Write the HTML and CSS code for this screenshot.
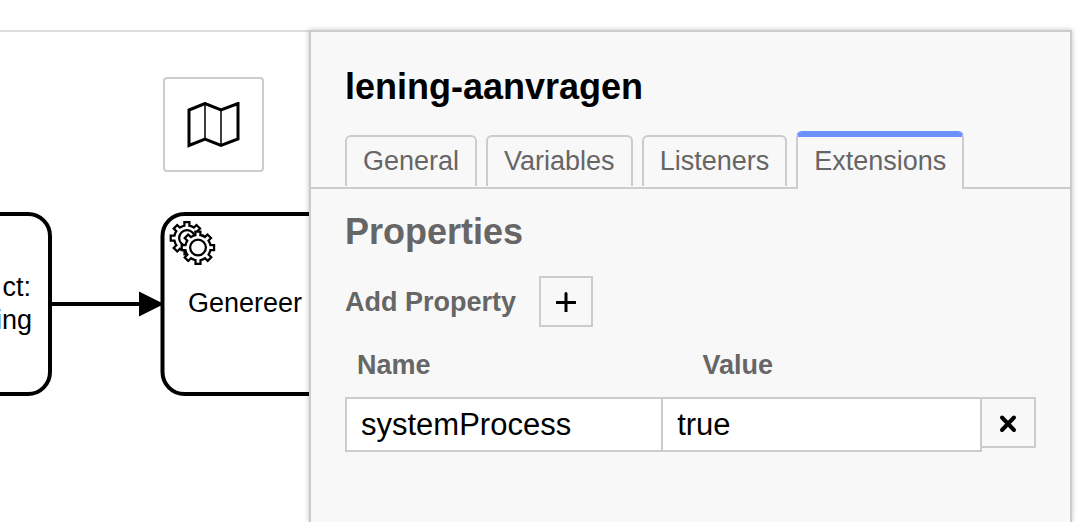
FILE: index.html
```html
<!DOCTYPE html>
<html lang="nl">
<head>
<meta charset="utf-8">
<title>lening-aanvragen</title>
<link rel="stylesheet" href="styles.css">
</head>
<body>
<div class="modeler">
  <main class="canvas">
    <svg class="diagram" role="img" aria-label="Process diagram">
      <defs>
        <path id="gear" d="m 1.12,7.3 v -1.71335 c 0.352326,-0.0705 0.703932,-0.17838 1.047628,-0.32133 0.344416,-0.14465 0.665822,-0.32133 0.966377,-0.52145 l 1.19431,1.18005 1.567487,-1.57688 -1.195028,-1.18014 c 0.403376,-0.61394 0.683079,-1.29908 0.825447,-2.01824 l 1.622133,-0.01 v -2.2196 l -1.636514,0.01 c -0.07333,-0.35153 -0.178319,-0.70024 -0.323564,-1.04372 -0.145244,-0.34406 -0.321407,-0.6644 -0.522735,-0.96217 l 1.131035,-1.13631 -1.583305,-1.56293 -1.129598,1.13589 c -0.614052,-0.40108 -1.302883,-0.68093 -2.022633,-0.82247 l 0.0093,-1.61852 h -2.241173 l 0.0042,1.63124 c -0.353763,0.0736 -0.705369,0.17977 -1.049785,0.32371 -0.344415,0.14437 -0.665102,0.32092 -0.9635006,0.52006 l -1.1698628,-1.15823 -1.5667691,1.5792 1.1684265,1.15669 c -0.4026573,0.61283 -0.68308,1.29797 -0.8247287,2.01713 l -1.6588041,0.003 v 2.22174 l 1.6724648,-0.006 c 0.073327,0.35077 0.1797598,0.70243 0.3242851,1.04472 0.1452428,0.34448 0.3214064,0.6644 0.5227339,0.96066 l -1.1993431,1.19723 1.5840256,1.56011 1.1964668,-1.19348 c 0.6140517,0.40346 1.3028827,0.68232 2.0233517,0.82331 l 7.19e-4,1.69892 z"/>
      </defs>
      <rect class="task" x="-175" y="182" width="225" height="180" rx="22"/>
      <text class="task-label task-label-end" x="31" y="264">ct:</text>
      <text class="task-label task-label-end" x="32" y="297">ing</text>
      <rect class="task" x="162.5" y="182" width="225" height="180" rx="22"/>
      <g class="gear" transform="translate(187 206) scale(2.25)">
        <use href="#gear"/>
        <circle r="3.5"/>
      </g>
      <g class="gear" transform="translate(198 215.5) scale(2.25)">
        <use href="#gear"/>
        <circle r="3.5"/>
      </g>
      <text class="task-label" x="188" y="280">Genereer</text>
      <path class="flow" d="M52 272H142"/>
      <path d="M139 259.500L164 272L139 284.500Z"/>
    </svg>
    <button class="minimap-toggle" type="button" aria-label="Toggle minimap">
      <svg class="map-icon" viewBox="0 0 54 46" aria-hidden="true">
        <path class="map-outline" d="M2 8L18 1.500L34 8L51 1.500V37L34 43.500L18 37L2 43.500Z"/>
        <path class="map-folds" d="M18 1.500V37M34 8V43.500"/>
      </svg>
    </button>
  </main>
  <aside class="panel">
    <h1 class="panel-title">lening-aanvragen</h1>
    <nav class="tabs">
      <a class="tab" href="#general">General</a>
      <a class="tab" href="#variables">Variables</a>
      <a class="tab" href="#listeners">Listeners</a>
      <a class="tab tab-active" href="#extensions" aria-current="page">Extensions</a>
    </nav>
    <section class="group" id="extensions">
      <h2 class="group-title">Properties</h2>
      <div class="add-row">
        <label for="add-property">Add Property</label>
        <button class="icon-button" id="add-property" type="button">
          <svg class="button-icon" viewBox="0 0 20 20" aria-hidden="true"><path class="plus" d="M10 1.500V19.500M1 10.500H19"/></svg>
        </button>
      </div>
      <div class="column-labels">
        <label for="property-name">Name</label>
        <label for="property-value">Value</label>
      </div>
      <div class="property-row">
        <input class="field field-name" id="property-name" type="text" value="systemProcess">
        <input class="field field-value" id="property-value" type="text" value="true">
        <button class="icon-button remove" type="button" aria-label="Remove property">
          <svg class="button-icon" viewBox="0 0 20 20" aria-hidden="true"><path class="cross" d="M4 4.500L16 17M16 4.500L4 17"/></svg>
        </button>
      </div>
    </section>
  </aside>
</div>
</body>
</html>
```
FILE: styles.css
```css
* {
  box-sizing: border-box;
}

body {
  margin: 0;
  background: #fff;
  color: #000;
  font-family: "Liberation Sans", Arial, sans-serif;
  font-size: 27px;
  line-height: 32px;
}

.modeler {
  display: grid;
  grid-template-columns: 309fr 763fr;
  min-height: 100vh;
  padding: 30px 5px 0 0;
  overflow: hidden;
}

.canvas {
  position: relative;
  min-width: 0;
  border-top: 2px solid #ddd;
}

.diagram {
  display: block;
  width: 100%;
  height: 100%;
}

.task {
  fill: #fff;
  stroke: #000;
  stroke-width: 4;
}

.task-label-end {
  text-anchor: end;
}

.gear {
  fill: #fff;
  stroke: #000;
  stroke-width: 1;
}

.flow {
  stroke: #000;
  stroke-width: 4;
}

.minimap-toggle {
  position: absolute;
  top: 45px;
  right: 45px;
  display: flex;
  align-items: center;
  justify-content: center;
  width: 101px;
  height: 95px;
  padding: 0;
  border: 2px solid #ccc;
  border-radius: 4px;
  background: #fff;
}

.map-icon {
  width: 54px;
  height: 46px;
  fill: none;
  stroke: #000;
}

.map-outline {
  stroke-width: 3;
}

.map-folds {
  stroke-width: 1.5;
}

.panel {
  position: relative;
  min-width: 0;
  border: 2px solid #ccc;
  border-bottom: 0;
  background: #f8f8f8;
  color: #666;
  box-shadow: 0 0 5px rgba(0, 0, 0, 0.25);
}

.panel-title {
  margin: 35px 34px 24px;
  color: #000;
  font-size: 36px;
  line-height: 40px;
}

.tabs {
  display: flex;
  align-items: flex-end;
  gap: 9px;
  padding: 0 34px;
  border-bottom: 2px solid #ccc;
}

.tab {
  margin-bottom: 1px;
  padding: 8px 16px 9px;
  border: 2px solid #ccc;
  border-bottom: 0;
  border-radius: 6px 6px 0 0;
  color: #666;
  text-decoration: none;
}

.tab-active {
  margin-bottom: -2px;
  padding-bottom: 12px;
  border-top: 6px solid #6b93ff;
  background: #f8f8f8;
}

.group {
  padding: 23px 34px;
  font-weight: bold;
}

.group-title {
  margin: 0 0 24px;
  font-size: 36px;
  line-height: 40px;
}

.add-row {
  display: flex;
  align-items: center;
  gap: 23px;
  margin-bottom: 22px;
}

.icon-button {
  display: flex;
  align-items: center;
  justify-content: center;
  width: 54px;
  height: 51px;
  padding: 0;
  border: 2px solid #ccc;
  background: #f8f8f8;
}

.button-icon {
  width: 20px;
  height: 20px;
  fill: none;
  stroke: #000;
  stroke-linecap: round;
}

.plus {
  stroke-width: 3;
}

.cross {
  stroke-width: 4;
}

.column-labels {
  display: grid;
  grid-template-columns: 1fr 1fr;
  margin-bottom: 16px;
}

.column-labels label {
  padding-left: 12px;
}

.property-row {
  display: flex;
  align-items: flex-start;
}

.field {
  min-width: 0;
  height: 55px;
  margin-right: -2px;
  padding: 0 14px;
  border: 2px solid #ccc;
  border-radius: 0;
  background: #fff;
  color: #000;
  font: 31px/40px "Liberation Sans", Arial, sans-serif;
}

.field-name {
  flex: 318 1 0;
}

.field-value {
  flex: 321 1 0;
}

.remove {
  width: 56px;
}
```
